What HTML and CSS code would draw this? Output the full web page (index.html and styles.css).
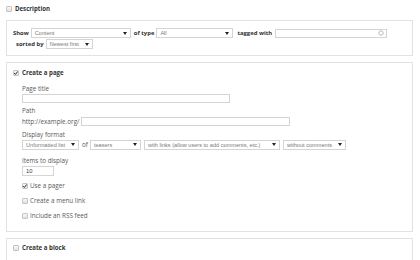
FILE: index.html
```html
<!DOCTYPE html>
<html>
<head>
<meta charset="utf-8">
<title>Views wizard</title>
<link rel="stylesheet" href="styles.css">
</head>
<body>
<div class="page">
  <div class="check-row"><span class="cb"></span><span class="legend">Description</span></div>

  <div class="box box-show">
    <div class="row row-1">
      <span class="lbl-b">Show</span>
      <span class="sel w-content"><span class="val">Content</span><span class="arrow"></span></span>
      <span class="lbl-b">of type</span>
      <span class="sel w-all"><span class="val">All</span><span class="arrow"></span></span>
      <span class="lbl-b">tagged with</span>
      <span class="txt w-tag"><svg class="throbber" viewBox="0 0 6 6" width="6" height="6"><circle cx="3" cy="3" r="2.2" fill="none" stroke="#aaa" stroke-width="0.8"/></svg></span>
    </div>
    <div class="row row-2">
      <span class="lbl-b">sorted by</span>
      <span class="sel w-sort"><span class="val">Newest first</span><span class="arrow"></span></span>
    </div>
  </div>

  <div class="box box-page">
    <div class="check-row"><span class="cb on"><svg viewBox="0 0 6 6" width="6" height="6"><path d="M1.2 3.1 L2.4 4.4 L4.8 1.4" fill="none" stroke="#333" stroke-width="1"/></svg></span><span class="legend">Create a page</span></div>
    <div class="fields">
      <div class="label m8">Page title</div>
      <div class="txt w-title m1"></div>

      <div class="label m4">Path</div>
      <div class="row path-row m2">
        <span class="prefix">http://example.org/</span>
        <span class="txt w-path"></span>
      </div>

      <div class="label m5">Display format</div>
      <div class="row fmt-row">
        <span class="sel w-fmt"><span class="val">Unformatted list</span><span class="arrow"></span></span>
        <span class="of">of</span>
        <span class="sel w-teasers"><span class="val">teasers</span><span class="arrow"></span></span>
        <span class="sel w-links"><span class="val">with links (allow users to add comments, etc.)</span><span class="arrow"></span></span>
        <span class="sel w-comments"><span class="val">without comments</span><span class="arrow"></span></span>
      </div>

      <div class="label m7">Items to display</div>
      <div class="txt w-items m1"><span class="val">10</span></div>

      <div class="check-row opt m6"><span class="cb on"><svg viewBox="0 0 6 6" width="6" height="6"><path d="M1.2 3.1 L2.4 4.4 L4.8 1.4" fill="none" stroke="#333" stroke-width="1"/></svg></span><span class="opt-text">Use a pager</span></div>
      <div class="check-row opt m7"><span class="cb"></span><span class="opt-text">Create a menu link</span></div>
      <div class="check-row opt m7"><span class="cb"></span><span class="opt-text">Include an RSS feed</span></div>
    </div>
  </div>

  <div class="box box-block">
    <div class="check-row"><span class="cb"></span><span class="legend">Create a block</span></div>
  </div>
</div>
</body>
</html>
```

FILE: styles.css
```css
* { box-sizing: border-box; }

html, body {
  margin: 0;
  padding: 0;
  background: #ffffff;
}

body {
  width: 420px;
  height: 260px;
  overflow: hidden;
  font-family: "Open Sans", "DejaVu Sans", sans-serif;
  font-size: 6.3px;
  color: #5a5a5a;
}

.page {
  padding: 5px 7px 0 6px;
}

.check-row {
  display: flex;
  align-items: center;
  height: 8px;
  line-height: 8px;
  gap: 3px;
}

.cb {
  flex: none;
  width: 6px;
  height: 6px;
  border: 1px solid #c4c4c4;
  border-radius: 1px;
  background: linear-gradient(#f8f8f8, #e2e2e2);
  display: flex;
  align-items: center;
  justify-content: center;
  overflow: hidden;
}

.cb svg {
  display: block;
  flex: none;
}

.legend {
  font-weight: 700;
  font-size: 6.1px;
  color: #333333;
}

.box {
  border: 1px solid #e2e2e2;
}

.box-show {
  margin-top: 7px;
  padding: 7px 6px 6px 6px;
}

.row {
  display: flex;
  align-items: center;
}

.row-1 { height: 10px; }
.row-2 { height: 10px; margin-top: 1px; padding-left: 3px; }

.lbl-b {
  font-weight: 700;
  font-size: 5.9px;
  color: #333333;
  white-space: nowrap;
  margin-right: 2px;
}

.sel {
  flex: none;
  height: 10px;
  border: 1px solid #d4d4d4;
  background: #ffffff;
  display: flex;
  align-items: center;
  justify-content: space-between;
  padding: 0 3px 0 3px;
  color: #7a7a7a;
  font-family: "Liberation Sans", Arial, sans-serif;
  font-size: 5.6px;
  line-height: 8px;
  white-space: nowrap;
  overflow: hidden;
  margin-right: 3px;
}

.arrow {
  flex: none;
  width: 0;
  height: 0;
  border-left: 2px solid transparent;
  border-right: 2px solid transparent;
  border-top: 3px solid #222222;
  margin-left: 2px;
}

.txt {
  flex: none;
  height: 9px;
  border: 1px solid #d4d4d4;
  background: #ffffff;
  display: flex;
  align-items: center;
  color: #444444;
  font-family: "Liberation Sans", Arial, sans-serif;
  font-size: 5.8px;
  padding: 0 3px;
}

.w-content { width: 100px; }
.w-all { width: 77px; margin-right: 4px; }
.w-tag {
  width: 112px;
  margin-left: 1px;
  justify-content: flex-end;
  padding-right: 2px;
}
.w-sort { width: 47px; }

.throbber { display: block; }

.box-page {
  margin-top: 6px;
  padding: 6px 6px 11px 6px;
}

.fields {
  margin-left: 9px;
}

.label {
  height: 8px;
  line-height: 8px;
  color: #5a5a5a;
}

.m1 { margin-top: 1px; }
.m2 { margin-top: 2px; }
.m4 { margin-top: 4px; }
.m5 { margin-top: 5px; }
.m6 { margin-top: 6px; }
.m7 { margin-top: 7px; }
.m8 { margin-top: 8px; }

.w-title { width: 208px; }

.path-row { height: 9px; }
.prefix {
  color: #5a5a5a;
  margin-right: 2px;
  white-space: nowrap;
}
.w-path { width: 209px; }

.fmt-row {
  margin-top: 0.5px;
  height: 10.5px;
}
.fmt-row .sel { height: 10.5px; margin-right: 3px; }
.fmt-row .of { margin-right: 2px; color: #5a5a5a; }
.w-fmt { width: 57px; }
.w-teasers { width: 51px; }
.w-links { width: 136px; }
.w-comments { width: 63px; }

.w-items {
  width: 32px;
  height: 10px;
}

.opt { gap: 2px; }
.opt-text { color: #5a5a5a; }

.box-block {
  margin-top: 6px;
  padding: 5px 6px 20px 6px;
}
```
